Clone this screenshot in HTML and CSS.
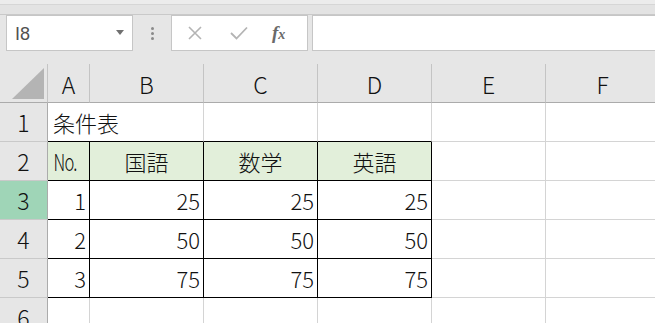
FILE: index.html
```html
<!DOCTYPE html>
<html lang="ja">
<head>
    <meta charset="UTF-8">
    <meta name="viewport" content="width=device-width, initial-scale=1.0">
    <title>条件表 - Excel</title>
    <link rel="stylesheet" href="styles.css">
</head>
<body>
    <div class="app">
        <div class="top-band"></div>
        <div class="toolbar">
            <div class="name-box">
                <span class="name-text">I8</span>
                <svg class="drop" width="8" height="5" viewBox="0 0 8 5"><path d="M0 0 L8 0 L4 5 Z" fill="#707070"/></svg>
            </div>
            <div class="grip"><span></span><span></span><span></span></div>
            <div class="fx-box">
                <svg class="icon" width="16" height="16" viewBox="0 0 16 16"><path d="M2 2 L14 14 M14 2 L2 14" stroke="#b4b4b4" stroke-width="1.6" fill="none"/></svg>
                <svg class="icon" width="18" height="14" viewBox="0 0 18 14"><path d="M1 7 L6.5 12.5 L17 1.5" stroke="#b4b4b4" stroke-width="1.8" fill="none"/></svg>
                <span class="fx">f<span class="fx-x">x</span></span>
            </div>
            <div class="formula"></div>
        </div>

        <div class="sheet">
            <!-- column headers -->
            <div class="corner">
                <svg width="32" height="31" viewBox="0 0 32 31"><path d="M32 0 L32 31 L0 31 Z" fill="#b4b4b4"/></svg>
            </div>
            <div class="col-head">A</div>
            <div class="col-head">B</div>
            <div class="col-head">C</div>
            <div class="col-head">D</div>
            <div class="col-head">E</div>
            <div class="col-head">F</div>

            <!-- row 1: title runs over into B1 -->
            <div class="row-head">1</div>
            <div class="cell top-edge title">条件表</div>
            <div class="cell top-edge"></div>
            <div class="cell top-edge"></div>
            <div class="cell"></div>
            <div class="cell"></div>

            <!-- row 2 -->
            <div class="row-head">2</div>
            <div class="cell boxed head-fill"><span class="no">No.</span></div>
            <div class="cell boxed head-fill center">国語</div>
            <div class="cell boxed head-fill center">数学</div>
            <div class="cell boxed head-fill center">英語</div>
            <div class="cell"></div>
            <div class="cell"></div>

            <!-- row 3 -->
            <div class="row-head selected">3</div>
            <div class="cell boxed num">1</div>
            <div class="cell boxed num">25</div>
            <div class="cell boxed num">25</div>
            <div class="cell boxed num">25</div>
            <div class="cell"></div>
            <div class="cell"></div>

            <!-- row 4 -->
            <div class="row-head">4</div>
            <div class="cell boxed num">2</div>
            <div class="cell boxed num">50</div>
            <div class="cell boxed num">50</div>
            <div class="cell boxed num">50</div>
            <div class="cell"></div>
            <div class="cell"></div>

            <!-- row 5 -->
            <div class="row-head">5</div>
            <div class="cell boxed num">3</div>
            <div class="cell boxed num">75</div>
            <div class="cell boxed num">75</div>
            <div class="cell boxed num">75</div>
            <div class="cell"></div>
            <div class="cell"></div>

            <!-- row 6 -->
            <div class="row-head">6</div>
            <div class="cell"></div>
            <div class="cell"></div>
            <div class="cell"></div>
            <div class="cell"></div>
            <div class="cell"></div>
            <div class="cell"></div>
        </div>
    </div>
</body>
</html>
```

FILE: styles.css
```css
* {
    box-sizing: border-box;
}
body {
    margin: 0;
    background-color: #e6e6e6;
    font-family: "Noto Sans CJK JP", "Noto Sans", sans-serif;
    color: #222;
    overflow: hidden;
}
.app {
    width: 655px;
    height: 323px;
    overflow: hidden;
}
.top-band {
    height: 15px;
    background-color: #e3e3e3;
    border-top: 4px solid #ececec;
    border-bottom: 1px solid #c9c9c9;
    box-shadow: inset 0 1px 0 #d6d6d6;
}
.toolbar {
    height: 49px;
    display: flex;
    align-items: flex-start;
    padding-left: 6px;
}
.name-box {
    width: 127px;
    height: 36px;
    background-color: #fff;
    border: 1px solid #c6c6c6;
    display: flex;
    align-items: center;
    justify-content: space-between;
    padding: 0 8px 0 8px;
}
.name-text {
    font-family: "Liberation Sans", Arial, sans-serif;
    font-size: 18px;
    color: #505050;
    padding-top: 2px;
}
.drop {
    margin-bottom: 2px;
}
.grip {
    width: 38px;
    height: 36px;
    display: flex;
    flex-direction: column;
    align-items: center;
    justify-content: center;
    gap: 2px;
}
.grip span {
    width: 3px;
    height: 3px;
    background-color: #8a8a8a;
    border-radius: 50%;
}
.fx-box {
    width: 137px;
    height: 36px;
    background-color: #fff;
    border: 1px solid #c6c6c6;
    display: flex;
    align-items: center;
    padding-left: 15px;
    gap: 27px;
}
.fx {
    font-family: "Liberation Serif", "Times New Roman", serif;
    font-style: italic;
    font-weight: bold;
    font-size: 19px;
    color: #6a6a6a;
    margin-left: -3px;
}
.fx-x {
    font-size: 14px;
}
.formula {
    flex: 1;
    height: 36px;
    margin-left: 4px;
    background-color: #fff;
    border: 1px solid #c6c6c6;
    border-right: none;
}
.sheet {
    display: grid;
    grid-template-columns: 48px 42px 114px 114px 114px 114px 114px;
    grid-template-rows: 39px repeat(6, 39px);
    width: 700px;
}
.corner {
    background-color: #e6e6e6;
    border-right: 1px solid #c4c4c4;
    border-bottom: 1px solid #ababab;
    display: flex;
    align-items: flex-end;
    justify-content: flex-start;
    padding: 0 0 3px 12px;
}
.col-head {
    background-color: #e6e6e6;
    border-right: 1px solid #c4c4c4;
    border-bottom: 1px solid #ababab;
    font-size: 23px;
    font-weight: 300;
    display: flex;
    align-items: center;
    justify-content: center;
    color: #111;
    padding-top: 1px;
}
.row-head {
    background-color: #e6e6e6;
    border-right: 1px solid #ababab;
    border-bottom: 1px solid #c9c9c9;
    font-size: 23px;
    font-weight: 300;
    display: flex;
    align-items: center;
    justify-content: center;
    color: #111;
}
.row-head.selected {
    background-color: #9fd5b7;
}
.cell {
    background-color: #fff;
    border-right: 1px solid #d4d4d4;
    border-bottom: 1px solid #d4d4d4;
    font-size: 22px;
    font-weight: 300;
    display: flex;
    align-items: center;
    padding: 0 4px;
    color: #111;
}
.cell.top-edge {
    border-bottom-color: #000;
}
.cell.boxed {
    border-right-color: #000;
    border-bottom-color: #000;
}
.head-fill {
    background-color: #e2efda;
}
.title {
    grid-column: span 2;
    padding-left: 5px;
    white-space: nowrap;
}
.no {
    display: inline-block;
    padding-left: 2px;
    font-size: 23px;
    letter-spacing: -1px;
    transform: scaleX(0.72);
    transform-origin: left center;
}
.center {
    justify-content: center;
}
.num {
    justify-content: flex-end;
    padding-right: 3px;
}
```
